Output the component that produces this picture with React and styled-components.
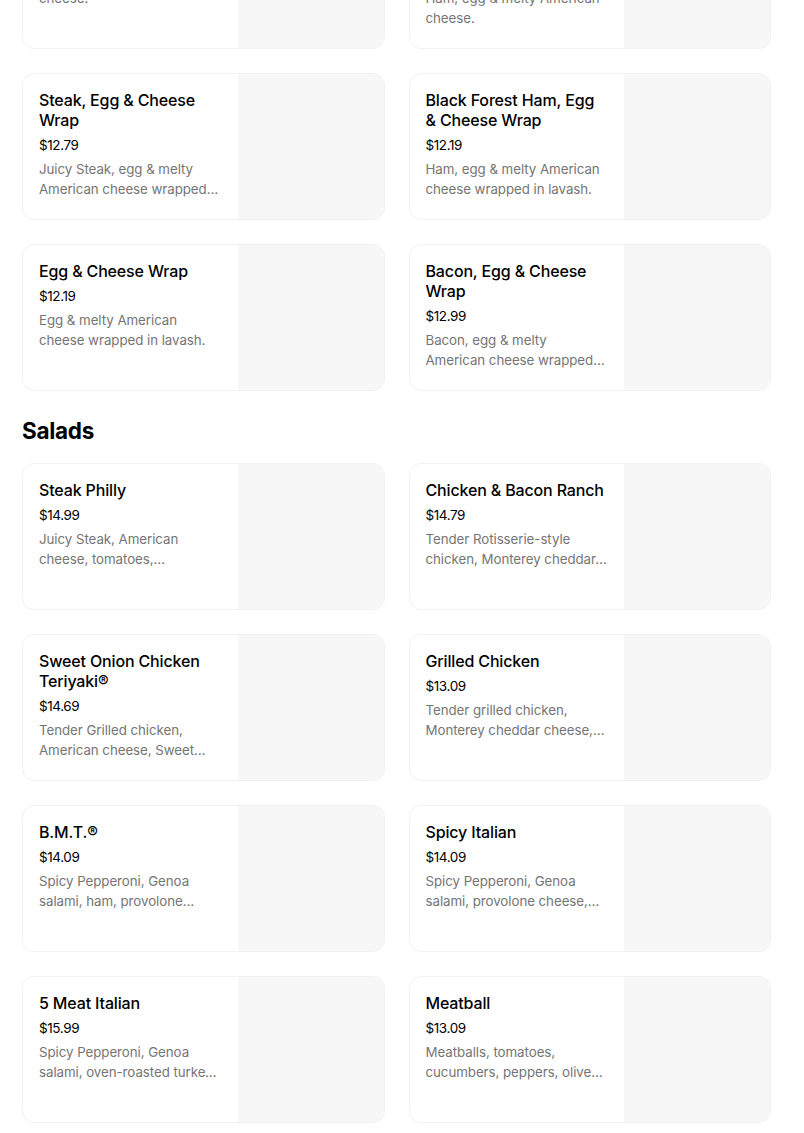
import React from "react";
import styled, { createGlobalStyle } from "styled-components";

const GlobalStyle = createGlobalStyle`
  html, body { margin: 0; padding: 0; background: #ffffff; overflow: hidden; }
  body { font-family: "Inter", "Liberation Sans", sans-serif; color: #000; }
  * { box-sizing: border-box; }
`;

const Page = styled.main`
  width: 804px;
  padding: 0 33px 0 22px;
`;

const Section = styled.section`
  display: flex;
  flex-direction: column;
  margin-top: ${(p) => p.$offset || 0}px;
`;

const SectionTitle = styled.h2`
  margin: 24px 0 16px;
  font-size: 22.5px;
  line-height: 32px;
  font-weight: 700;
  letter-spacing: -0.3px;
`;

const Grid = styled.div`
  display: grid;
  grid-template-columns: 1fr 1fr;
  column-gap: 24px;
  row-gap: 24px;
`;

const Card = styled.div`
  display: flex;
  height: 147px;
  border: 1px solid #f1f1f1;
  border-radius: 12px;
  overflow: hidden;
  background: #fff;
`;

const Info = styled.div`
  flex: 1;
  min-width: 0;
  padding: 16px 16px 0 16px;
  display: flex;
  flex-direction: column;
`;

const Name = styled.div`
  font-size: 16px;
  line-height: 20px;
  font-weight: 500;
  letter-spacing: -0.15px;
  color: #000;
`;

const Price = styled.div`
  margin-top: 5px;
  font-size: 13.5px;
  line-height: 20px;
  color: #000;
  letter-spacing: -0.4px;
`;

const Desc = styled.div`
  margin-top: 4px;
  font-size: 13.3px;
  line-height: 20px;
  letter-spacing: -0.05px;
  color: #757575;
  display: -webkit-box;
  -webkit-line-clamp: 2;
  -webkit-box-orient: vertical;
  overflow: hidden;
`;

const Photo = styled.div`
  flex: 0 0 146px;
  background: #f7f7f7;
`;

const Item = ({ name, price, desc }) => (
  <Card>
    <Info>
      <Name>{name}</Name>
      <Price>{price}</Price>
      <Desc>{desc}</Desc>
    </Info>
    <Photo />
  </Card>
);

const wraps = [
  { name: "Ham, Egg & Cheese", price: "$11.99", desc: "Ham, egg & melty American cheese." },
  { name: "Black Forest Ham, Egg & Cheese", price: "$12.19", desc: "Ham, egg & melty American cheese." },
  { name: "Steak, Egg & Cheese Wrap", price: "$12.79", desc: "Juicy Steak, egg & melty American cheese wrapped in lavash." },
  { name: "Black Forest Ham, Egg & Cheese Wrap", price: "$12.19", desc: "Ham, egg & melty American cheese wrapped in lavash." },
  { name: "Egg & Cheese Wrap", price: "$12.19", desc: "Egg & melty American cheese wrapped in lavash." },
  { name: "Bacon, Egg & Cheese Wrap", price: "$12.99", desc: "Bacon, egg & melty American cheese wrapped in lavash." },
];

const salads = [
  { name: "Steak Philly", price: "$14.99", desc: "Juicy Steak, American cheese, tomatoes, cucumbers, green peppers and red onions." },
  { name: "Chicken & Bacon Ranch", price: "$14.79", desc: "Tender Rotisserie-style chicken, Monterey cheddar, bacon, tomatoes and cucumbers." },
  { name: "Sweet Onion Chicken Teriyaki®", price: "$14.69", desc: "Tender Grilled chicken, American cheese, Sweet Onion Teriyaki sauce." },
  { name: "Grilled Chicken", price: "$13.09", desc: "Tender grilled chicken, Monterey cheddar cheese, tomatoes and cucumbers." },
  { name: "B.M.T.®", price: "$14.09", desc: "Spicy Pepperoni, Genoa salami, ham, provolone cheese, tomatoes." },
  { name: "Spicy Italian", price: "$14.09", desc: "Spicy Pepperoni, Genoa salami, provolone cheese, tomatoes." },
  { name: "5 Meat Italian", price: "$15.99", desc: "Spicy Pepperoni, Genoa salami, oven-roasted turkey, ham, and bacon." },
  { name: "Meatball", price: "$13.09", desc: "Meatballs, tomatoes, cucumbers, peppers, olives and red onions." },
];

export default function App() {
  return (
    <>
      <GlobalStyle />
      <Page>
        <Section $offset={-98}>
          <Grid>
            {wraps.map((it) => (
              <Item key={it.name} {...it} />
            ))}
          </Grid>
        </Section>
        <Section>
          <SectionTitle>Salads</SectionTitle>
          <Grid>
            {salads.map((it) => (
              <Item key={it.name} {...it} />
            ))}
          </Grid>
        </Section>
      </Page>
    </>
  );
}
